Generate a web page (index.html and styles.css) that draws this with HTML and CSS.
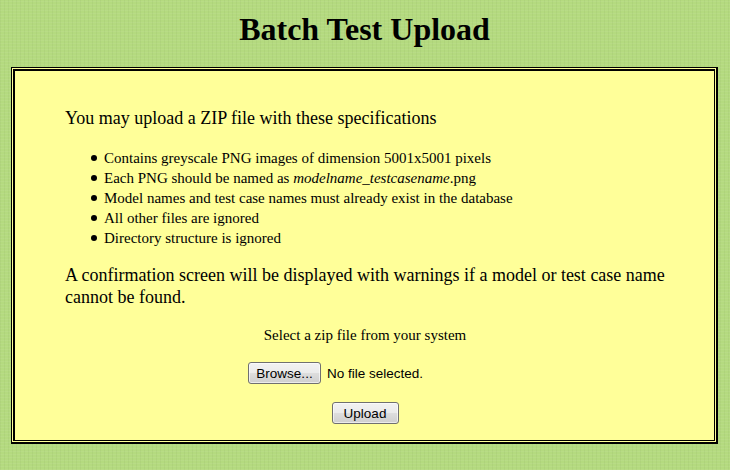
FILE: index.html
```html
<!DOCTYPE html>
<html>
<head>
<meta charset="utf-8">
<title>Batch Test Upload</title>
<link rel="stylesheet" href="styles.css">
</head>
<body>
<h1 class="title">Batch Test Upload</h1>
<div class="panel">
  <div class="panel-inner">
    <p class="lead">You may upload a ZIP file with these specifications</p>
    <ul class="specs">
      <li>Contains greyscale PNG images of dimension 5001x5001 pixels</li>
      <li>Each PNG should be named as <em>modelname_testcasename</em>.png</li>
      <li>Model names and test case names must already exist in the database</li>
      <li>All other files are ignored</li>
      <li>Directory structure is ignored</li>
    </ul>
    <p class="lead">A confirmation screen will be displayed with warnings if a model or test case name cannot be found.</p>
    <form class="upload">
      <div class="select-label">Select a zip file from your system</div>
      <div class="file-row">
        <div class="file-input">
          <button type="button" class="btn btn-browse">Browse...</button>
          <span class="file-name">No file selected.</span>
        </div>
      </div>
      <div class="submit-row">
        <button type="button" class="btn btn-upload">Upload</button>
      </div>
    </form>
  </div>
</div>
</body>
</html>
```

FILE: styles.css
```css
html, body {
  margin: 0;
  padding: 0;
}
body {
  background-color: #b4da7f;
  background-image:
    repeating-linear-gradient(0deg, rgba(255,255,255,0.05) 0 1px, transparent 1px 3px),
    repeating-linear-gradient(90deg, rgba(0,0,0,0.03) 0 1px, transparent 1px 4px);
  font-family: "Liberation Serif", "Times New Roman", serif;
  color: #000;
  padding: 0 12px 0 11px;
  height: 470px;
  box-sizing: border-box;
}
.title {
  margin: 0;
  padding-top: 11px;
  height: 67px;
  box-sizing: border-box;
  text-align: center;
  font-size: 32px;
  font-weight: bold;
  line-height: 37px;
}
.panel {
  background: #ffff99;
  border: 1px solid #000;
  border-right-width: 2px;
  border-bottom-width: 2px;
  padding: 1px;
  height: 377px;
  box-sizing: border-box;
}
.panel-inner {
  border: 2px solid #000;
  border-right-width: 1px;
  border-bottom-width: 1px;
  height: 100%;
  box-sizing: border-box;
  padding: 36px 49px 0 50px;
}
.lead {
  margin: 0;
  font-size: 18px;
  line-height: 22px;
}
.specs {
  margin: 19px 0 16px 0;
  padding-left: 39px;
  font-size: 15px;
  line-height: 20px;
  list-style: none;
}
.specs li::before {
  content: "";
  display: inline-block;
  width: 6px;
  height: 6px;
  border-radius: 50%;
  background: #000;
  margin-left: -13px;
  margin-right: 7px;
  vertical-align: 2px;
}
.upload {
  margin: 18px 0 0 0;
  text-align: center;
}
.select-label {
  font-size: 15px;
  line-height: 18px;
}
.file-row {
  margin-top: 18px;
  display: flex;
  justify-content: center;
}
.file-input {
  width: 234px;
  display: flex;
  align-items: center;
  gap: 6px;
}
.submit-row {
  margin-top: 18px;
  display: flex;
  justify-content: center;
}
.btn {
  font-family: "Liberation Sans", Arial, sans-serif;
  font-size: 13.5px;
  color: #000;
  height: 22px;
  border: 1px solid #707070;
  border-radius: 3px;
  background: linear-gradient(#f2f2f2 0%, #ebebeb 48%, #dddddd 52%, #cfcfcf 100%);
  box-shadow: inset 0 0 0 1px rgba(255,255,255,0.6);
}
.btn-browse {
  width: 73px;
  padding: 0 4px;
}
.btn-upload {
  width: 67px;
  padding: 0 4px;
}
.file-name {
  font-family: "Liberation Sans", Arial, sans-serif;
  font-size: 13.5px;
  white-space: nowrap;
}
```
